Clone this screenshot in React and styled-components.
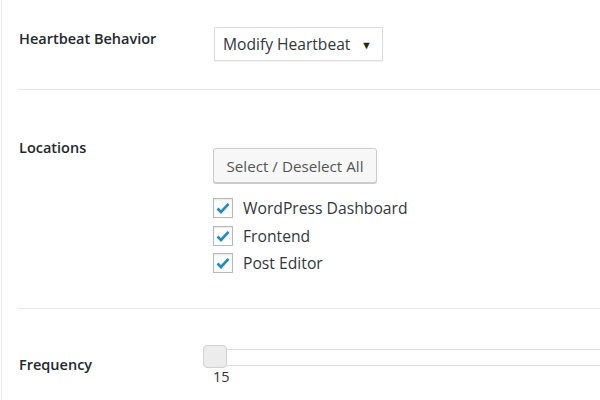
import React from "react";
import styled, { createGlobalStyle } from "styled-components";

const Global = createGlobalStyle`
  html, body { margin: 0; padding: 0; background: #fff; }
  body { font-family: "Open Sans", "Noto Sans", sans-serif; color: #32373c; overflow: hidden; }
`;

const Page = styled.div`
  margin-left: 1px;
  border-left: 1px solid #ececec;
  padding-left: 16px;
  height: 400px;
  box-sizing: border-box;
`;

const Row = styled.div`
  display: flex;
  align-items: flex-start;
  height: ${(p) => p.$h}px;
  box-sizing: border-box;
  border-bottom: ${(p) => (p.$sep ? "1px solid #e5e5e5" : "none")};
`;

const Label = styled.div`
  width: 194px;
  flex: none;
  padding-left: 1px;
  padding-top: ${(p) => p.$top}px;
  font-size: 14.5px;
  line-height: 20px;
  font-weight: 600;
  color: #23282d;
`;

const Control = styled.div`
  display: flex;
  flex-direction: column;
  align-items: flex-start;
  padding-top: ${(p) => p.$top}px;
  flex: 1;
  min-width: 0;
`;

const Select = styled.div`
  box-sizing: border-box;
  width: 169px;
  height: 34px;
  border: 1px solid #dcdcdc;
  box-shadow: 0 1px 1px rgba(0,0,0,0.04);
  display: flex;
  align-items: center;
  justify-content: space-between;
  padding: 0 10px 0 8px;
  font-size: 15.6px;
  color: #32373c;
  margin-left: 1px;
`;

const Arrow = styled.span`
  font-size: 11px;
  color: #222;
`;

const Button = styled.div`
  box-sizing: border-box;
  width: 164px;
  height: 35px;
  border: 1px solid #ccc;
  border-radius: 3px;
  background: #f7f7f7;
  box-shadow: 0 1px 0 #ccc;
  display: flex;
  align-items: center;
  justify-content: center;
  font-size: 15.2px;
  color: #555;
`;

const Checks = styled.div`
  display: flex;
  flex-direction: column;
  gap: 7.5px;
  margin-top: 15px;
`;

const CheckRow = styled.label`
  display: flex;
  align-items: center;
  gap: 10px;
  font-size: 15.7px;
  line-height: 20px;
  color: #32373c;
`;

const Box = styled.span`
  box-sizing: border-box;
  width: 20px;
  height: 20px;
  border: 1px solid #b4b9be;
  box-shadow: inset 0 1px 2px rgba(0,0,0,0.1);
  background: #fff;
  display: flex;
  align-items: center;
  justify-content: center;
`;

const SliderWrap = styled.div`
  position: relative;
  width: 100%;
  padding-top: 40px;
`;

const Track = styled.div`
  box-sizing: border-box;
  height: 17px;
  margin-left: 2px;
  margin-right: -20px;
  border: 1px solid #ddd;
  border-right: none;
  background: #fff;
`;

const Handle = styled.div`
  position: absolute;
  left: -10px;
  top: 36px;
  box-sizing: border-box;
  width: 24px;
  height: 23px;
  border: 1px solid #d0d0d0;
  border-radius: 4px;
  background: #ececec;
`;

const Value = styled.div`
  font-size: 14.5px;
  line-height: 16px;
  color: #333;
  margin-top: 3px;
`;

const Check = () => (
  <svg width="14" height="12" viewBox="0 0 14 12">
    <path d="M1.5 6.5 L5 10 L12.5 1.8" fill="none" stroke="#1e8cbe" strokeWidth="2.6" />
  </svg>
);

const items = ["WordPress Dashboard", "Frontend", "Post Editor"];

export default function App() {
  return (
    <>
      <Global />
      <Page>
        <Row $h={90} $sep>
          <Label $top={29}>Heartbeat Behavior</Label>
          <Control $top={27}>
            <Select>
              <span>Modify Heartbeat</span>
              <Arrow>▼</Arrow>
            </Select>
          </Control>
        </Row>
        <Row $h={219} $sep>
          <Label $top={48}>Locations</Label>
          <Control $top={58}>
            <Button>Select / Deselect All</Button>
            <Checks>
              {items.map((t) => (
                <CheckRow key={t}>
                  <Box><Check /></Box>
                  {t}
                </CheckRow>
              ))}
            </Checks>
          </Control>
        </Row>
        <Row $h={91}>
          <Label $top={46}>Frequency</Label>
          <Control $top={0}>
            <SliderWrap>
              <Track />
              <Handle />
              <Value>15</Value>
            </SliderWrap>
          </Control>
        </Row>
      </Page>
    </>
  );
}
